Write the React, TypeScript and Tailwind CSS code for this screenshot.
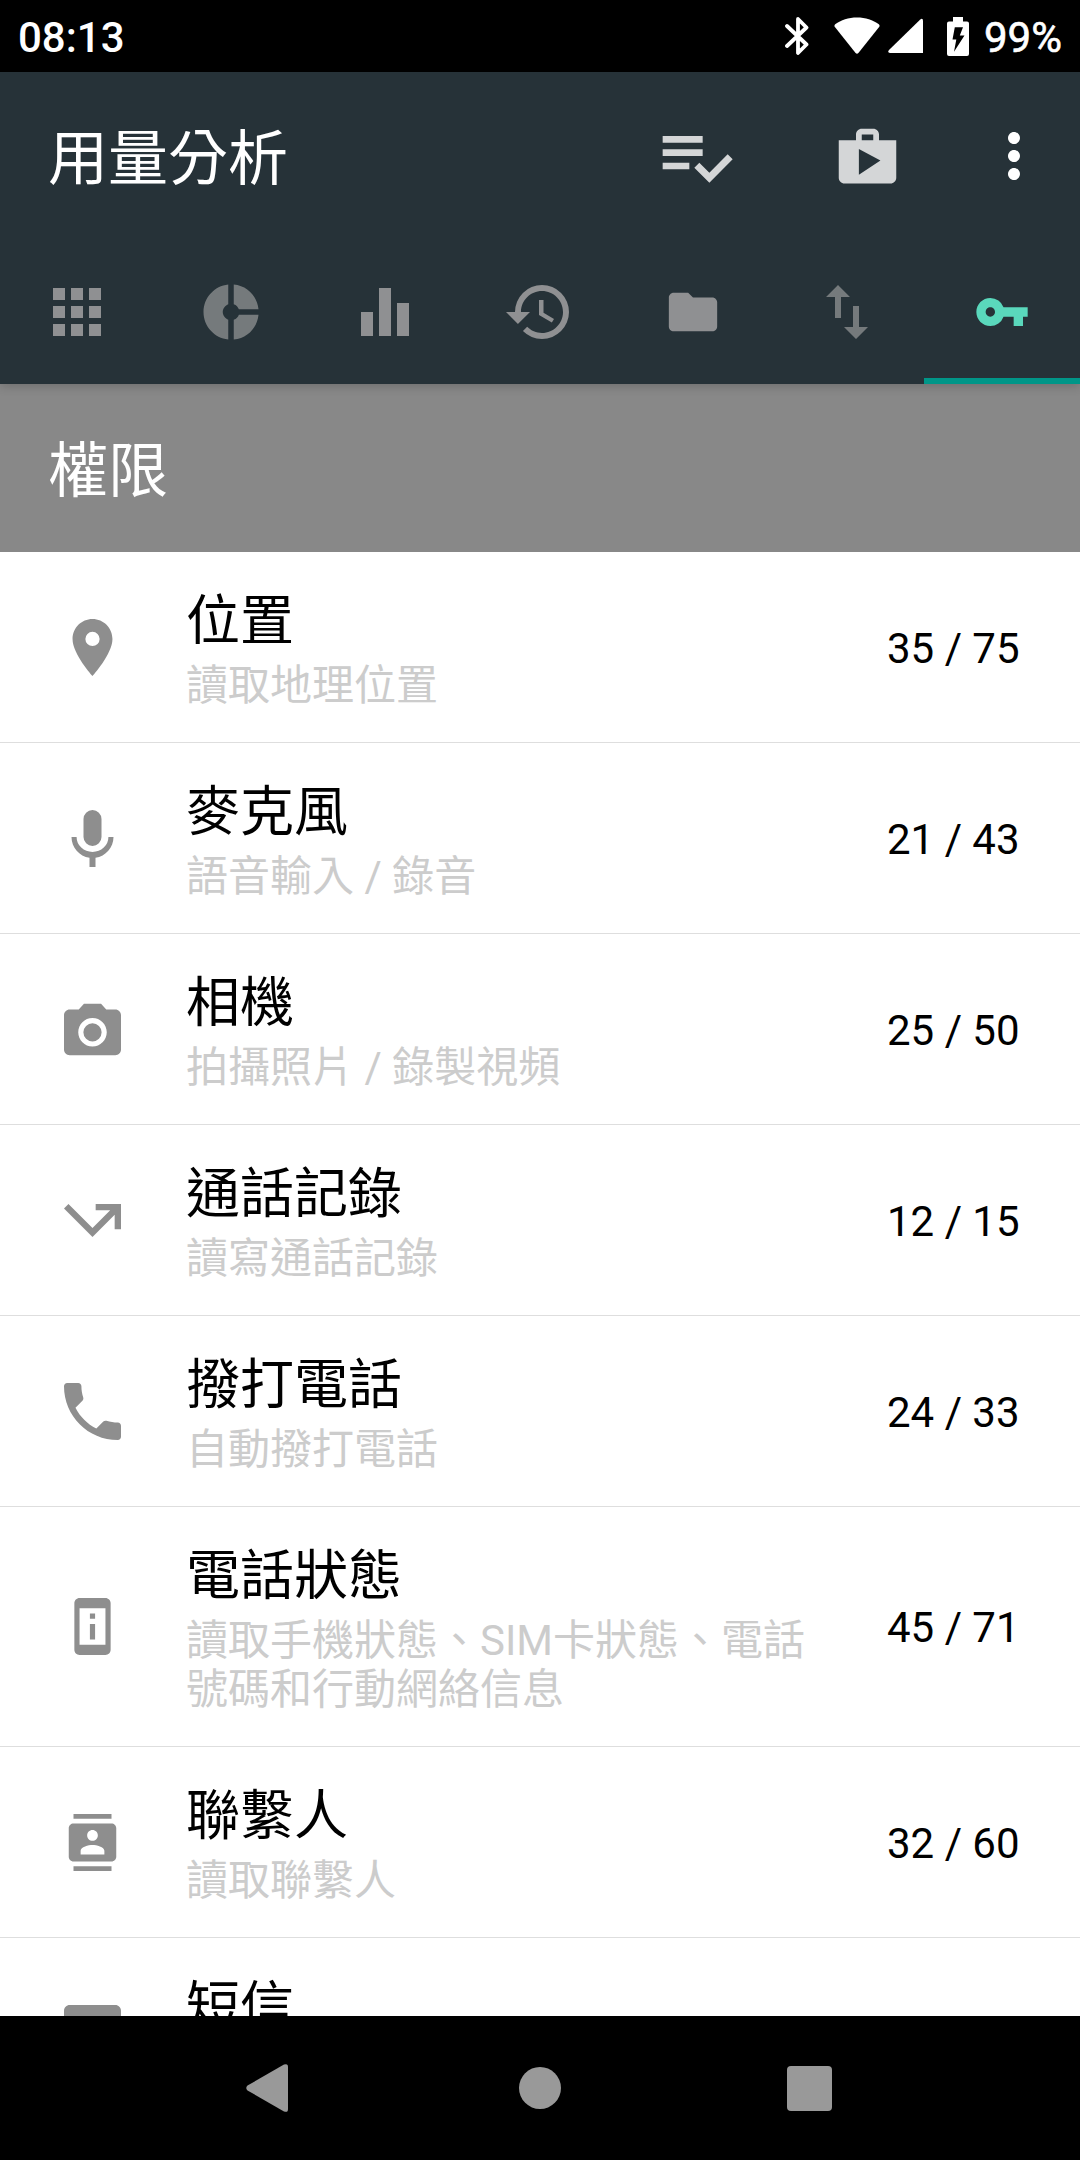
import React from "react";
import { MdApps, MdDonutSmall, MdEqualizer, MdFolder, MdHistory, MdImportExport, MdMoreVert, MdVpnKey } from "react-icons/md";

type Permission = {
  title: string;
  text: string;
  count: string;
  box: string;
  path: string;
};

// box is the tight bounding box of the glyph, so each icon fills its slot
const permissions: Permission[] = [
  {
    title: "位置",
    text: "讀取地理位置",
    count: "35 / 75",
    box: "5 2 14 20",
    path: "M12 2C8.13 2 5 5.13 5 9c0 5.25 7 13 7 13s7-7.75 7-13c0-3.87-3.13-7-7-7zm0 9.5a2.5 2.5 0 0 1 0-5 2.5 2.5 0 0 1 0 5z",
  },
  {
    title: "麥克風",
    text: "語音輸入 / 錄音",
    count: "21 / 43",
    box: "5 2 14 19",
    path: "M12 2a3 3 0 0 1 3 3v6a3 3 0 0 1-6 0V5a3 3 0 0 1 3-3zm7 9c0 3.53-2.61 6.44-6 6.93V21h-2v-3.07c-3.39-.49-6-3.4-6-6.93h1.7a5.3 5 0 0 0 10.6 0z",
  },
  {
    title: "相機",
    text: "拍攝照片 / 錄製視頻",
    count: "25 / 50",
    box: "2 2 20 18",
    path: "M12 8.8a3.2 3.2 0 1 0 0 6.4 3.2 3.2 0 0 0 0-6.4zM9 2 7.17 4H4c-1.1 0-2 .9-2 2v12c0 1.1.9 2 2 2h16c1.1 0 2-.9 2-2V6c0-1.1-.9-2-2-2h-3.17L15 2H9zm3 15c-2.76 0-5-2.24-5-5s2.24-5 5-5 5 2.24 5 5-2.24 5-5 5z",
  },
  {
    title: "通話記錄",
    text: "讀寫通話記錄",
    count: "12 / 15",
    box: "3 7 18 10.41",
    path: "M3 8.41l9 9 7-7V15h2V7h-8v2h4.59L12 14.59 4.41 7 3 8.41z",
  },
  {
    title: "撥打電話",
    text: "自動撥打電話",
    count: "24 / 33",
    box: "3 3 18 18",
    path: "M6.62 10.79c1.44 2.83 3.76 5.14 6.59 6.59l2.2-2.2c.27-.27.67-.36 1.02-.24 1.12.37 2.33.57 3.57.57.55 0 1 .45 1 1V20c0 .55-.45 1-1 1-9.39 0-17-7.61-17-17 0-.55.45-1 1-1h3.5c.55 0 1 .45 1 1 0 1.25.2 2.45.57 3.57.11.35.03.74-.25 1.02l-2.2 2.2z",
  },
  {
    title: "電話狀態",
    text: "讀取手機狀態、SIM卡狀態、電話號碼和行動網絡信息",
    count: "45 / 71",
    box: "5 1 14 22",
    path: "M13 7h-2v2h2V7zm0 4h-2v6h2v-6zm4-9.99L7 1c-1.1 0-2 .9-2 2v18c0 1.1.9 2 2 2h10c1.1 0 2-.9 2-2V3c0-1.1-.9-1.99-2-1.99zM17 19H7V5h10v14z",
  },
  {
    title: "聯繫人",
    text: "讀取聯繫人",
    count: "32 / 60",
    box: "2 0 20 24",
    path: "M20 0H4v2h16V0zM4 24h16v-2H4v2zM20 4H4c-1.1 0-2 .9-2 2v12c0 1.1.9 2 2 2h16c1.1 0 2-.9 2-2V6c0-1.1-.9-2-2-2zm-8 2.75c1.24 0 2.25 1.01 2.25 2.25s-1.01 2.25-2.25 2.25S9.75 10.24 9.75 9 10.76 6.75 12 6.75zM17 17H7v-1.5c0-1.67 3.33-2.5 5-2.5s5 .83 5 2.5V17z",
  },
  {
    title: "短信",
    text: "",
    count: "",
    box: "2 2 20 20",
    path: "M20 2H4c-1.1 0-1.99.9-1.99 2L2 22l4-4h14c1.1 0 2-.9 2-2V4c0-1.1-.9-2-2-2zM9 11H7V9h2v2zm4 0h-2V9h2v2zm4 0h-2V9h2v2z",
  },
];

function StatusBar() {
  return (
    <div className="flex h-[72px] shrink-0 items-center bg-black pl-[18px] pr-[18px] text-[42px] font-medium leading-none text-white">
      <span className="mt-[4px]">08:13</span>
      <svg className="ml-auto mr-[25px] h-[38px] w-[24px]" viewBox="0 0 24 38" fill="none" stroke="currentColor" strokeWidth="3.8" strokeLinejoin="round" strokeLinecap="round">
        <path d="M2 9 21.5 27.5 13 36V2L21.5 10.5 2 29" />
      </svg>
      <svg className="mr-[8px] h-[38px] w-[46px]" viewBox="0 0 46 38" fill="currentColor">
        <path d="M23 .5C14.5.5 7 3 1.200 7.200Q-.2 8.400.9 10L21.600 36Q23 37.400 24.400 36L45.100 10Q46.200 8.400 44.800 7.200C39 3 31.500.5 23 .5z" />
      </svg>
      <svg className="mr-[24px] h-[36px] w-[35px]" viewBox="0 0 35 36" fill="currentColor">
        <path d="M32 1.700Q35-.5 35 3V35H2Q-1 34.500 1 32z" />
      </svg>
      <svg className="mr-[15px] h-[39px] w-[22px]" viewBox="0 0 22 39" fill="currentColor" fillRule="evenodd">
        <path d="M6 0h10v4.500h4q2 0 2 2V37q0 2-2 2H2q-2 0-2-2V6.500q0-2 2-2h4zM7.800 10.200 5.500 22.500H9.300L7 34.800 17.500 18.500H12.800L16 10.200z" />
      </svg>
      <span className="mt-[4px] w-[78px] font-normal [-webkit-text-stroke:0.6px_white]">99%</span>
    </div>
  );
}

function Header() {
  return (
    <header className="relative z-10 shrink-0 bg-[#263238] text-[#8f9092] shadow-[0_2px_10px_rgba(0,0,0,0.2)]">
      <div className="flex h-[168px] items-center pl-12 pr-[30px]">
        <h1 className="mt-[8px] text-[60px] leading-[70px] text-white">用量分析</h1>
        <svg className="ml-auto mr-[97px] size-[80px] text-[#d4d6d7]" viewBox="0 0 24 24" fill="currentColor">
          <path d="M14 10H2v2h12v-2zm0-4H2v2h12V6zM2 16h8v-2H2v2zm19.500-4.500L23 13l-6.990 7-4.510-4.500L13 14l3.010 3 5.490-5.500z" />
        </svg>
        <svg className="mr-[76px] mt-[2px] size-[69px] text-[#d4d6d7]" viewBox="0 0 24 24" fill="currentColor">
          <path d="M16 6V4c0-1.110-.89-2-2-2h-4c-1.110 0-2 .89-2 2v2H2v13c0 1.110.89 2 2 2h16c1.110 0 2-.89 2-2V6h-6zm-6-2h4v2h-4V4zM9 18V9l7.500 4L9 18z" />
        </svg>
        <MdMoreVert className="size-[72px] text-white" />
      </div>
      <nav className="grid h-36 grid-cols-[repeat(6,154px)_1fr]">
        <div className="flex items-center justify-center"><MdApps className="size-[72px]" /></div>
        <div className="flex items-center justify-center"><MdDonutSmall className="size-[66px] text-[#757a7c]" /></div>
        <div className="flex items-center justify-center"><MdEqualizer className="size-[72px]" /></div>
        <div className="flex items-center justify-center"><MdHistory className="size-[72px]" /></div>
        <div className="flex items-center justify-center"><MdFolder className="size-[58px]" /></div>
        <div className="flex items-center justify-center"><MdImportExport className="size-[72px] text-[#757a7c]" /></div>
        <div className="flex items-center justify-center border-b-[6px] border-[#009688] pt-[6px]"><MdVpnKey className="size-[56px] text-[#5ad8bc]" /></div>
      </nav>
    </header>
  );
}

function PermissionRow({ title, text, count, box, path }: Permission) {
  return (
    <li className="flex shrink-0 items-center border-b border-[#dedede] pl-16">
      <svg className="size-[57px] shrink-0" viewBox={box} fill="#8e8e8e">
        <path d={path} />
      </svg>
      <div className="ml-[65px] min-h-[190px] w-[650px] pb-[32px] pt-[38px]">
        <h3 className="text-[54px] leading-[64px] text-black">{title}</h3>
        <p className="mt-[7px] text-[42px] leading-[49px] text-[#cccccc]">{text}</p>
      </div>
      <span className="ml-[51px] mt-[2px] whitespace-nowrap text-[42px] leading-[49px] text-black">{count}</span>
    </li>
  );
}

function NavigationBar() {
  return (
    <div className="flex h-36 shrink-0 items-center bg-black pl-[246px] text-[#999999]">
      <svg className="h-[48px] w-[42px]" viewBox="0 0 42 48" fill="currentColor">
        <path d="M38 .6Q42-1 42 3V45Q42 49 38 47.400L1.500 26.500Q-1 24 1.500 21.500z" />
      </svg>
      <span className="ml-[231px] size-[42px] rounded-full bg-[#999999]" />
      <span className="ml-[226px] size-[45px] rounded-[4px] bg-[#999999]" />
    </div>
  );
}

export default function App() {
  return (
    <div className="flex h-[2160px] w-[1080px] flex-col overflow-hidden bg-white font-[Roboto,'Noto_Sans_CJK_TC',sans-serif]">
      <StatusBar />
      <Header />
      <div className="flex h-[168px] shrink-0 items-center bg-[#888888] pl-12">
        <h2 className="mt-[8px] text-[60px] leading-[70px] text-white">權限</h2>
      </div>
      <ul className="flex min-h-0 flex-1 flex-col overflow-hidden">
        {permissions.map((item) => (
          <PermissionRow key={item.title} {...item} />
        ))}
      </ul>
      <NavigationBar />
    </div>
  );
}
